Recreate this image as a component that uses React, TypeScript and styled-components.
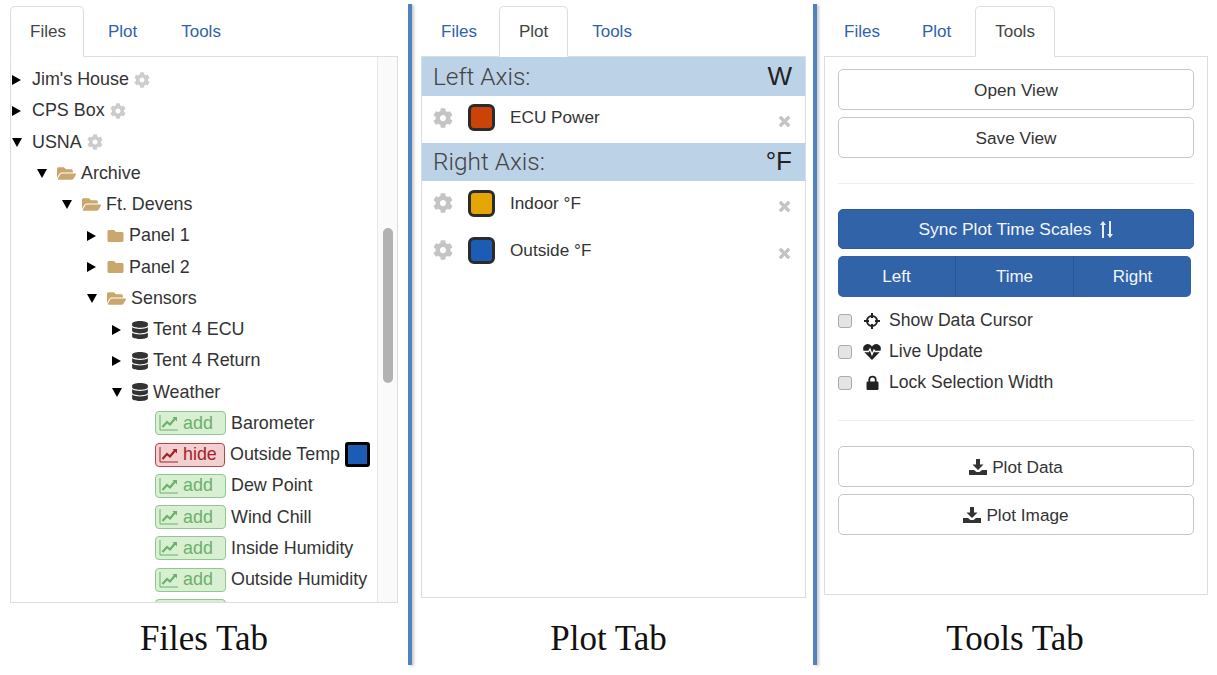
import React from 'react';
import styled, { createGlobalStyle } from 'styled-components';
import { FaCog, FaDatabase, FaFolder, FaFolderOpen, FaTimes } from 'react-icons/fa';

const GlobalStyles = createGlobalStyle`
  html, body {
    margin: 0;
    padding: 0;
    background: #fff;
  }
  body {
    font-family: "Liberation Sans", Arial, sans-serif;
    color: #333;
    overflow: hidden;
  }
  * {
    box-sizing: border-box;
  }
`;

const TAB_NAMES = ['Files', 'Plot', 'Tools'];

// glyphicons that the icon packages only come close to
const ChartIcon = () => (
  <svg width="20" height="18" viewBox="0 0 20 18" fill="none" stroke="currentColor">
    <path d="M1 1 V16 H19" strokeWidth="1" />
    <path d="M3.5 13 L8 8 L11 10.5 L16 4.5" strokeWidth="2.2" />
    <path d="M13.5 3 H18 V7.5 Z" fill="currentColor" stroke="none" />
  </svg>
);

const CursorIcon = () => (
  <svg width="16" height="16" viewBox="0 0 16 16" fill="none" stroke="currentColor">
    <circle cx="8" cy="8" r="5" strokeWidth="2" />
    <path d="M8 0 V5 M8 11 V16 M0 8 H5 M11 8 H16" strokeWidth="2" />
  </svg>
);

const HeartIcon = () => (
  <svg width="18" height="16" viewBox="0 0 18 16">
    <path
      d="M9 16 L1.6 8.4 C-0.6 6 -0.2 2.4 2 1 C4.4 -0.6 7.4 0 9 2.6 C10.6 0 13.6 -0.6 16 1 C18.2 2.4 18.6 6 16.4 8.4 Z"
      fill="currentColor"
    />
    <path d="M0 7.5 H5.5 L7 5 L9 10.5 L11 6 L12 7.5 H18" fill="none" stroke="#fff" strokeWidth="1.3" />
  </svg>
);

const LockIcon = () => (
  <svg width="13" height="15" viewBox="0 0 13 15" fill="none">
    <path d="M3.3 7 V4.5 C3.3 0.6 9.7 0.6 9.7 4.5 V7" stroke="currentColor" strokeWidth="1.8" />
    <rect x="0.5" y="6.5" width="12" height="8.5" rx="1.2" fill="currentColor" />
  </svg>
);

const SaveIcon = () => (
  <svg width="18" height="16" viewBox="0 0 18 16" fill="currentColor">
    <path d="M7 0 H11 V5.5 H14.5 L9 11 L3.5 5.5 H7 Z" />
    <path d="M0 11 H5 L7.5 13 H10.5 L13 11 H18 V16 H0 Z" />
  </svg>
);

const SortIcon = () => (
  <svg width="15" height="19" viewBox="0 0 15 19" style={{ marginLeft: 7 }}>
    <path d="M4 1 L7 5 H5 V18 H3 V5 H1 Z M11 18 L14 14 H12 V1 H10 V14 H8 Z" fill="#e8eef7" />
  </svg>
);

const Tabs = ({ active }: { active: string }) => (
  <TabBar>
    {TAB_NAMES.map((name) => (
      <Tab key={name} $active={name === active}>
        {name}
      </Tab>
    ))}
  </TabBar>
);

const Row = ({
  level,
  open,
  children,
}: {
  level: number;
  open?: boolean;
  children: React.ReactNode;
}) => (
  <TreeRow $level={level}>
    <Caret $open={open} />
    {children}
  </TreeRow>
);

const Trace = ({ name, hidden, color }: { name: string; hidden?: boolean; color?: string }) => (
  <TraceRow>
    <TraceBadge $hidden={hidden}>
      <ChartIcon />
      {hidden ? 'hide' : 'add'}
    </TraceBadge>
    <TraceName>{name}</TraceName>
    {color && <TraceSwatch $color={color} />}
  </TraceRow>
);

const SeriesRow = ({ name, color }: { name: string; color: string }) => (
  <Series>
    <FaCog size={20} color="#c4c4c4" />
    <SeriesSwatch $color={color} />
    <SeriesName>{name}</SeriesName>
    <RemoveIcon>
      <FaTimes size={15} />
    </RemoveIcon>
  </Series>
);

const App = () => {
  return (
    <>
      <GlobalStyles />
      <Page>
        <Column $width={408} $inset={10} $panel={388}>
          <Tabs active="Files" />
          <Panel $height={547}>
            <TreeScroll>
              <TreeList>
                <Row level={0}>
                  <RootName>Jim's House</RootName>
                  <RootGear />
                </Row>
                <Row level={0}>
                  <RootName>CPS Box</RootName>
                  <RootGear />
                </Row>
                <Row level={0} open>
                  <RootName>USNA</RootName>
                  <RootGear />
                </Row>
                <Row level={1} open>
                  <FolderOpenIcon />
                  <NodeName>Archive</NodeName>
                </Row>
                <Row level={2} open>
                  <FolderOpenIcon />
                  <NodeName>Ft. Devens</NodeName>
                </Row>
                <Row level={3}>
                  <FolderIcon />
                  <NodeName>Panel 1</NodeName>
                </Row>
                <Row level={3}>
                  <FolderIcon />
                  <NodeName>Panel 2</NodeName>
                </Row>
                <Row level={3} open>
                  <FolderOpenIcon />
                  <NodeName>Sensors</NodeName>
                </Row>
                <Row level={4}>
                  <DatabaseIcon />
                  <DbName>Tent 4 ECU</DbName>
                </Row>
                <Row level={4}>
                  <DatabaseIcon />
                  <DbName>Tent 4 Return</DbName>
                </Row>
                <Row level={4} open>
                  <DatabaseIcon />
                  <DbName>Weather</DbName>
                </Row>
                <Trace name="Barometer" />
                <Trace name="Outside Temp" hidden color="#1c5cb5" />
                <Trace name="Dew Point" />
                <Trace name="Wind Chill" />
                <Trace name="Inside Humidity" />
                <Trace name="Outside Humidity" />
                <TraceRow>
                  <TraceBadge />
                </TraceRow>
              </TreeList>
            </TreeScroll>
            <ScrollTrack>
              <ScrollThumb />
            </ScrollTrack>
          </Panel>
          <Caption>Files Tab</Caption>
        </Column>
        <Divider />
        <Column $width={400} $inset={8} $panel={385}>
          <Tabs active="Plot" />
          <Panel $height={542} $column>
            <AxisHeader>
              <AxisLabel>Left Axis:</AxisLabel>
              <AxisUnit>W</AxisUnit>
            </AxisHeader>
            <SeriesRow name="ECU Power" color="#cc4309" />
            <AxisHeader>
              <AxisLabel>Right Axis:</AxisLabel>
              <AxisUnit>°F</AxisUnit>
            </AxisHeader>
            <SeriesRow name="Indoor °F" color="#e5a507" />
            <SeriesRow name="Outside °F" color="#1c5cb5" />
          </Panel>
          <Caption $shift={-5}>Plot Tab</Caption>
        </Column>
        <Divider />
        <Column $width={399} $inset={6} $panel={384}>
          <Tabs active="Tools" />
          <Panel $height={539} $column>
            <ToolsBody>
              <OutlineButton>Open View</OutlineButton>
              <OutlineButton>Save View</OutlineButton>
              <Rule $top={18} $bottom={25} />
              <SyncButton>
                Sync Plot Time Scales
                <SortIcon />
              </SyncButton>
              <SegmentGroup>
                <Segment>Left</Segment>
                <Segment>Time</Segment>
                <Segment>Right</Segment>
              </SegmentGroup>
              <Options>
                <Option>
                  <Check type="checkbox" readOnly />
                  <OptionIcon>
                    <CursorIcon />
                  </OptionIcon>
                  Show Data Cursor
                </Option>
                <Option>
                  <Check type="checkbox" readOnly />
                  <OptionIcon>
                    <HeartIcon />
                  </OptionIcon>
                  Live Update
                </Option>
                <Option>
                  <Check type="checkbox" readOnly />
                  <OptionIcon>
                    <LockIcon />
                  </OptionIcon>
                  Lock Selection Width
                </Option>
              </Options>
              <Rule $top={22} $bottom={25} />
              <OutlineButton>
                <SaveIcon />
                Plot Data
              </OutlineButton>
              <OutlineButton>
                <SaveIcon />
                Plot Image
              </OutlineButton>
            </ToolsBody>
          </Panel>
          <Caption $shift={-1}>Tools Tab</Caption>
        </Column>
      </Page>
    </>
  );
};

export default App;

const Page = styled.div`
  width: 1217px;
  height: 675px;
  display: flex;
  align-items: flex-start;
  background: #fff;
`;

const Column = styled.section<{ $width: number; $inset: number; $panel: number }>`
  width: ${(p) => p.$width}px;
  height: 675px;
  padding: 6px 0 0 ${(p) => p.$inset}px;
  display: flex;
  flex-direction: column;

  & > * {
    width: ${(p) => p.$panel}px;
  }
`;

const Divider = styled.div`
  width: 4px;
  height: 661px;
  margin: 4px 1px 0 0;
  flex: none;
  background: #4f82bf;
  box-shadow: 2px 1px 3px rgba(0, 0, 0, 0.22);
`;

const TabBar = styled.nav`
  display: flex;
  gap: 4px;
  height: 51px;
  position: relative;
  z-index: 1;
  margin-bottom: -1px;
`;

const Tab = styled.div<{ $active: boolean }>`
  height: 51px;
  padding: 0 19px;
  font-size: 17px;
  line-height: 49px;
  color: ${(p) => (p.$active ? '#444' : '#2f62ab')};
  background: ${(p) => (p.$active ? '#fff' : 'transparent')};
  border: 1px solid ${(p) => (p.$active ? '#ddd' : 'transparent')};
  border-bottom-color: ${(p) => (p.$active ? '#fff' : 'transparent')};
  border-radius: 5px 5px 0 0;

  &:first-child {
    padding-right: 17px;
  }
`;

const Panel = styled.div<{ $height: number; $column?: boolean }>`
  height: ${(p) => p.$height}px;
  flex: none;
  display: flex;
  flex-direction: ${(p) => (p.$column ? 'column' : 'row')};
  border: 1px solid #ddd;
  overflow: hidden;
`;

const Caption = styled.div<{ $shift?: number }>`
  margin-top: auto;
  margin-bottom: 14px;
  height: 44px;
  padding-right: ${(p) => (p.$shift ? -p.$shift * 2 : 0)}px;
  font-family: "Liberation Serif", "Times New Roman", serif;
  font-size: 35px;
  line-height: 44px;
  color: #111;
  text-align: center;
`;

const TreeScroll = styled.div`
  flex: 1;
  min-width: 0;
  overflow: hidden;
`;

const TreeList = styled.div`
  padding-top: 7px;
`;

const TreeRow = styled.div<{ $level: number }>`
  height: 31.25px;
  display: flex;
  align-items: center;
  padding-left: ${(p) => p.$level * 25 + 1}px;
`;

const Caret = styled.span<{ $open?: boolean }>`
  flex: none;
  width: 0;
  height: 0;
  border-style: solid;
  ${(p) =>
    p.$open
      ? `
    border-width: 9px 5px 0 5px;
    border-color: #000 transparent transparent transparent;
    margin-right: 10px;
  `
      : `
    border-width: 5px 0 5px 9px;
    border-color: transparent transparent transparent #000;
    margin-right: 11px;
  `}
`;

const RootName = styled.span`
  font-size: 17.9px;
  color: #333;
  margin-right: 5px;
`;

const RootGear = styled(FaCog)`
  width: 16px;
  height: 16px;
  flex: none;
  color: #ccc;
`;

const NodeName = styled.span`
  font-size: 17.9px;
  color: #333;
  margin-left: 5px;
`;

const DbName = styled.span`
  font-size: 17.9px;
  color: #333;
  margin-left: 5px;
`;

const FolderOpenIcon = styled(FaFolderOpen)`
  width: 19px;
  height: 17px;
  flex: none;
  color: #c9a76d;
`;

const FolderIcon = styled(FaFolder)`
  width: 17px;
  height: 16px;
  flex: none;
  color: #c9a76d;
`;

const DatabaseIcon = styled(FaDatabase)`
  width: 16px;
  height: 18px;
  flex: none;
  color: #333;
`;

const TraceRow = styled.div`
  height: 31.25px;
  display: flex;
  align-items: center;
  padding-left: 144px;
`;

const TraceBadge = styled.span<{ $hidden?: boolean }>`
  width: ${(p) => (p.$hidden ? 70 : 71)}px;
  height: 24px;
  flex: none;
  display: flex;
  align-items: center;
  gap: 4px;
  padding-left: 3px;
  font-size: 17.9px;
  border-radius: 4px;
  border: 1.5px solid ${(p) => (p.$hidden ? '#b5474d' : '#8fc98f')};
  color: ${(p) => (p.$hidden ? '#a3232b' : '#6cb06c')};
  background: ${(p) => (p.$hidden ? '#f2d0d0' : '#d9efd2')};
`;

const TraceName = styled.span`
  font-size: 17.9px;
  color: #333;
  margin-left: 5px;
  white-space: nowrap;
`;

const TraceSwatch = styled.span<{ $color: string }>`
  width: 25px;
  height: 25px;
  margin-left: 5px;
  flex: none;
  background: ${(p) => p.$color};
  border: 3px solid #000;
  border-radius: 3px;
`;

const ScrollTrack = styled.div`
  width: 20px;
  flex: none;
  padding: 171px 4px 0 5px;
  background: #fafafa;
  border-left: 1px solid #e8e8e8;
`;

const ScrollThumb = styled.div`
  height: 155px;
  background: #b2b2b2;
  border-radius: 5px;
`;

const AxisHeader = styled.div`
  height: 38.5px;
  flex: none;
  display: flex;
  align-items: center;
  justify-content: space-between;
  padding: 0 13px 0 11px;
  background: #bcd2e6;
`;

const AxisLabel = styled.span`
  font-family: "Roboto", "Liberation Sans", sans-serif;
  font-weight: 300;
  font-size: 24.4px;
  color: #444;
`;

const AxisUnit = styled.span`
  font-size: 26px;
  color: #222;
`;

const Series = styled.div`
  height: 47px;
  flex: none;
  display: flex;
  align-items: center;
  padding: 0 13px 3px 11px;
  color: #333;
`;

const SeriesSwatch = styled.span<{ $color: string }>`
  width: 27px;
  height: 27px;
  margin-left: 15px;
  flex: none;
  background: ${(p) => p.$color};
  border: 3px solid #2b2b2b;
  border-radius: 6px;
`;

const SeriesName = styled.span`
  flex: 1;
  margin-left: 15px;
  font-size: 17.2px;
  color: #333;
`;

const RemoveIcon = styled.span`
  display: flex;
  margin-top: 7px;
  color: #c4c4c4;

  svg {
    stroke: currentColor;
    stroke-width: 30;
  }
`;

const ToolsBody = styled.div`
  padding: 12px 13px 0;
  display: flex;
  flex-direction: column;
`;

const OutlineButton = styled.button`
  height: 41px;
  flex: none;
  margin-bottom: 7px;
  display: flex;
  align-items: center;
  justify-content: center;
  gap: 5px;
  padding: 1px 0 0;
  background: #fff;
  border: 1px solid #c6c6c6;
  border-radius: 5px;
  font-family: inherit;
  font-size: 17.2px;
  color: #333;
`;

const Rule = styled.hr<{ $top: number; $bottom: number }>`
  width: 100%;
  height: 1px;
  margin: ${(p) => p.$top}px 0 ${(p) => p.$bottom}px;
  border: none;
  background: #eee;
`;

const SyncButton = styled.button`
  height: 40px;
  flex: none;
  display: flex;
  align-items: center;
  justify-content: center;
  padding: 1px 0 0;
  background: #3163a9;
  border: 1px solid #2b5a9c;
  border-radius: 5px;
  font-family: inherit;
  font-size: 17.4px;
  color: #f2f5fa;
`;

const SegmentGroup = styled.div`
  width: 353px;
  height: 41px;
  margin-top: 7px;
  flex: none;
  display: flex;
  background: #3163a9;
  border-radius: 5px;
  overflow: hidden;
`;

const Segment = styled.div`
  flex: 1;
  text-align: center;
  font-size: 17px;
  line-height: 41px;
  color: #f2f5fa;

  & + & {
    border-left: 1px solid #2a5797;
  }
`;

const Options = styled.div`
  margin-top: 8px;
  display: flex;
  flex-direction: column;
`;

const Option = styled.label`
  height: 31px;
  display: flex;
  align-items: center;
  font-size: 17.6px;
  color: #333;
`;

const Check = styled.input`
  appearance: none;
  width: 14px;
  height: 14px;
  margin: 0 10px 0 0;
  flex: none;
  background: #e4e4e4;
  border: 1px solid #aaa;
  border-radius: 3px;
`;

const OptionIcon = styled.span`
  width: 27px;
  flex: none;
  display: flex;
  justify-content: center;
  padding-right: 7px;
  color: #222;
`;
